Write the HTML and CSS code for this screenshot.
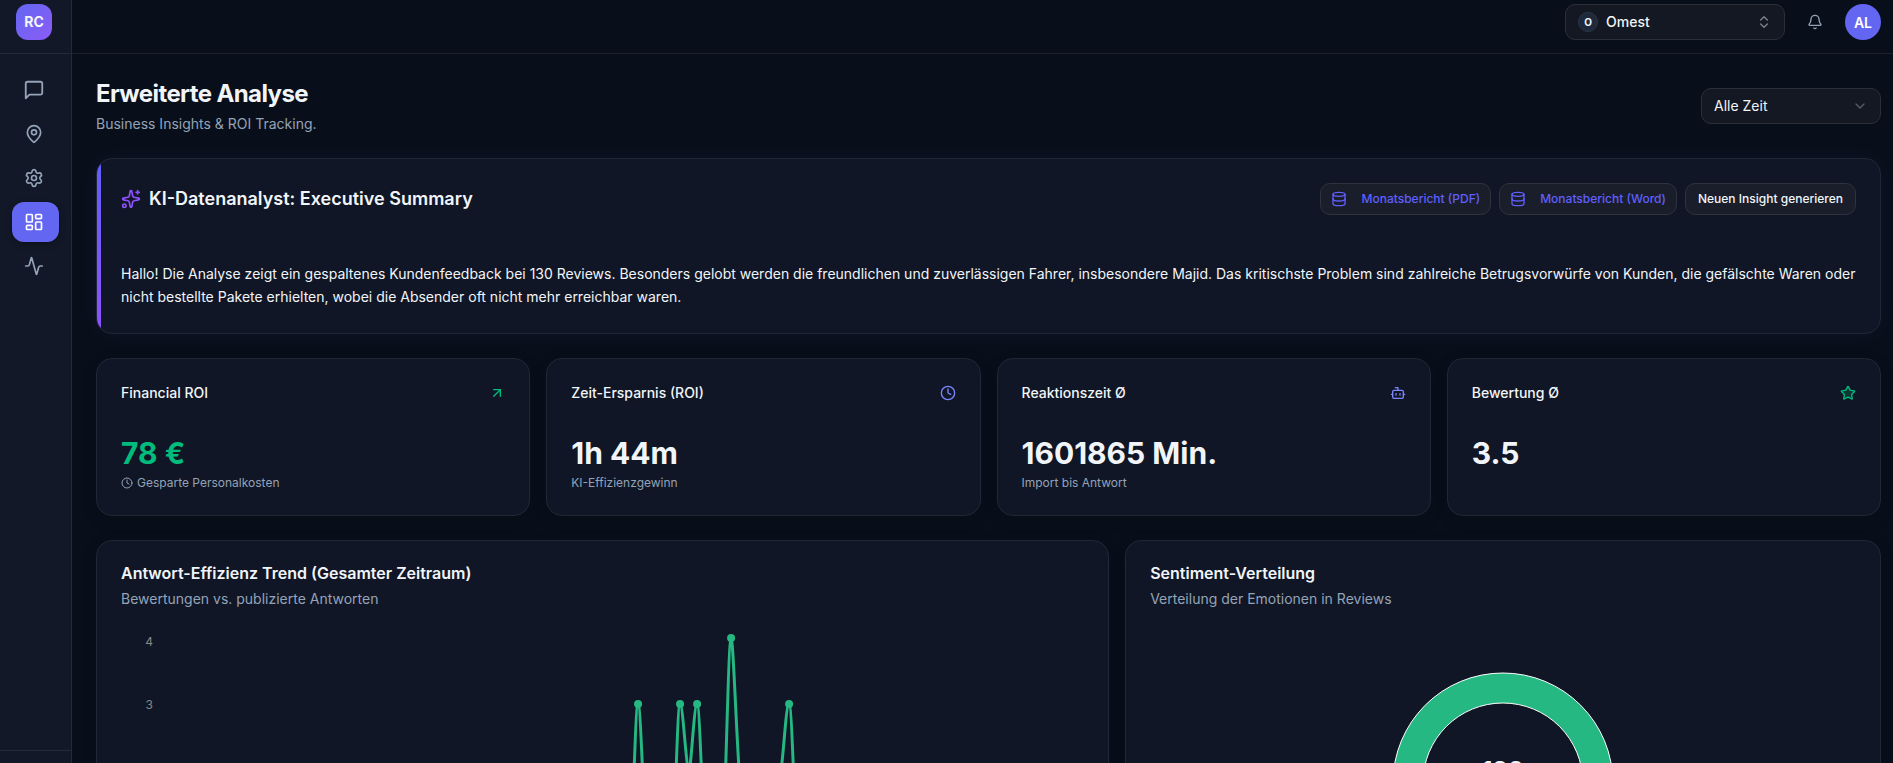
FILE: index.html
```html
<!DOCTYPE html>
<html lang="de">
<head>
  <meta charset="UTF-8">
  <meta name="viewport" content="width=device-width, initial-scale=1.0">
  <title>Erweiterte Analyse</title>
  <link rel="stylesheet" href="styles.css">
</head>
<body>
<aside class="sidebar">
  <div class="sidebar-header">
    <a href="#" class="logo">RC</a>
  </div>
  <nav class="sidebar-nav">
    <a href="#" class="nav-link" aria-label="Bewertungen">
      <svg class="icon icon-lg" viewBox="0 0 24 24"><path d="M21 15a2 2 0 0 1-2 2H7l-4 4V5a2 2 0 0 1 2-2h14a2 2 0 0 1 2 2z" transform="translate(-1.2 -1.2) scale(1.1)"/></svg>
    </a>
    <a href="#" class="nav-link" aria-label="Standorte">
      <svg class="icon icon-lg" viewBox="0 0 24 24"><path d="M20 10c0 4.993-5.539 10.193-7.399 11.799a1 1 0 0 1-1.202 0C9.539 20.193 4 14.993 4 10a8 8 0 0 1 16 0"/><circle cx="12" cy="10" r="3"/></svg>
    </a>
    <a href="#" class="nav-link" aria-label="Einstellungen">
      <svg class="icon icon-lg" viewBox="0 0 24 24"><path d="M9.671 4.136a2.34 2.34 0 0 1 4.659 0 2.34 2.34 0 0 0 3.319 1.915 2.34 2.34 0 0 1 2.33 4.033 2.34 2.34 0 0 0 0 3.831 2.34 2.34 0 0 1-2.33 4.033 2.34 2.34 0 0 0-3.319 1.915 2.34 2.34 0 0 1-4.659 0 2.34 2.34 0 0 0-3.32-1.915 2.34 2.34 0 0 1-2.33-4.033 2.34 2.34 0 0 0 0-3.831A2.34 2.34 0 0 1 6.35 6.051a2.34 2.34 0 0 0 3.319-1.915"/><circle cx="12" cy="12" r="3"/></svg>
    </a>
    <a href="#" class="nav-link active" aria-label="Analyse" aria-current="page">
      <svg class="icon icon-lg" viewBox="0 0 24 24"><rect width="7" height="9" x="3" y="3" rx="1"/><rect width="7" height="5" x="14" y="3" rx="1"/><rect width="7" height="9" x="14" y="12" rx="1"/><rect width="7" height="5" x="3" y="16" rx="1"/></svg>
    </a>
    <a href="#" class="nav-link" aria-label="Aktivität">
      <svg class="icon icon-lg" viewBox="0 0 24 24"><path d="M22 12h-2.48a2 2 0 0 0-1.93 1.46l-2.35 8.36a.25.25 0 0 1-.48 0L9.24 2.18a.25.25 0 0 0-.48 0l-2.35 8.36A2 2 0 0 1 4.49 12H2"/></svg>
    </a>
  </nav>
  <div class="sidebar-footer"></div>
</aside>

<div class="page">
  <header class="topbar">
    <div class="select-box company-select">
      <span class="company-badge">O</span>
      <select aria-label="Unternehmen">
        <option>Omest</option>
      </select>
      <svg class="icon icon-sm select-icon" viewBox="0 0 24 24"><path d="m7 15 5 5 5-5"/><path d="m7 9 5-5 5 5"/></svg>
    </div>
    <button class="bell-button" aria-label="Benachrichtigungen">
      <svg class="icon icon-sm" viewBox="0 0 24 24"><path d="M10.268 21a2 2 0 0 0 3.464 0"/><path d="M3.262 15.326A1 1 0 0 0 4 17h16a1 1 0 0 0 .74-1.673C19.41 13.956 18 12.499 18 8A6 6 0 0 0 6 8c0 4.499-1.411 5.956-2.738 7.326"/></svg>
    </button>
    <button class="avatar">AL</button>
  </header>

  <main class="content">
    <div class="page-header">
      <div>
        <h1>Erweiterte Analyse</h1>
        <p class="subtitle">Business Insights &amp; ROI Tracking.</p>
      </div>
      <div class="select-box period-select">
        <select aria-label="Zeitraum">
          <option>Alle Zeit</option>
        </select>
        <svg class="icon icon-sm select-icon" viewBox="0 0 24 24"><path d="m6 9 6 6 6-6"/></svg>
      </div>
    </div>

    <section class="card summary">
      <div class="summary-header">
        <h2>
          <svg class="icon icon-lg" viewBox="0 0 24 24"><path d="M11.017 2.814a1 1 0 0 1 1.966 0l1.051 5.558a2 2 0 0 0 1.594 1.594l5.558 1.051a1 1 0 0 1 0 1.966l-5.558 1.051a2 2 0 0 0-1.594 1.594l-1.051 5.558a1 1 0 0 1-1.966 0l-1.051-5.558a2 2 0 0 0-1.594-1.594l-5.558-1.051a1 1 0 0 1 0-1.966l5.558-1.051a2 2 0 0 0 1.594-1.594z"/><path d="M20 2v4"/><path d="M22 4h-4"/><circle cx="4" cy="20" r="2"/></svg>
          KI-Datenanalyst: Executive Summary
        </h2>
        <div class="summary-actions">
          <button class="btn btn-report">
            <svg class="icon icon-sm" viewBox="0 0 24 24"><ellipse cx="12" cy="5" rx="9" ry="3"/><path d="M3 5V19A9 3 0 0 0 21 19V5"/><path d="M3 12A9 3 0 0 0 21 12"/></svg>
            Monatsbericht (PDF)
          </button>
          <button class="btn btn-report">
            <svg class="icon icon-sm" viewBox="0 0 24 24"><ellipse cx="12" cy="5" rx="9" ry="3"/><path d="M3 5V19A9 3 0 0 0 21 19V5"/><path d="M3 12A9 3 0 0 0 21 12"/></svg>
            Monatsbericht (Word)
          </button>
          <button class="btn">Neuen Insight generieren</button>
        </div>
      </div>
      <p class="summary-text">Hallo! Die Analyse zeigt ein gespaltenes Kundenfeedback bei 130 Reviews. Besonders gelobt werden die freundlichen und zuverlässigen Fahrer, insbesondere Majid. Das kritischste Problem sind zahlreiche Betrugsvorwürfe von Kunden, die gefälschte Waren oder nicht bestellte Pakete erhielten, wobei die Absender oft nicht mehr erreichbar waren.</p>
    </section>

    <section class="stats">
      <div class="card stat">
        <div class="stat-header">
          <h3>Financial ROI</h3>
          <svg class="icon icon-sm green" viewBox="0 0 24 24"><path d="M7 7h10v10"/><path d="M7 17 17 7"/></svg>
        </div>
        <div class="stat-value green">78 €</div>
        <p class="stat-note">
          <svg class="icon icon-xs" viewBox="0 0 24 24"><circle cx="12" cy="12" r="10"/><path d="M12 6v6l4 2"/></svg>
          Gesparte Personalkosten
        </p>
      </div>
      <div class="card stat">
        <div class="stat-header">
          <h3>Zeit-Ersparnis (ROI)</h3>
          <svg class="icon icon-sm indigo" viewBox="0 0 24 24"><circle cx="12" cy="12" r="10"/><path d="M12 6v6l4 2"/></svg>
        </div>
        <div class="stat-value">1h 44m</div>
        <p class="stat-note">KI-Effizienzgewinn</p>
      </div>
      <div class="card stat">
        <div class="stat-header">
          <h3>Reaktionszeit Ø</h3>
          <svg class="icon icon-sm indigo" viewBox="0 0 24 24"><path d="M12 8V4H8"/><rect width="16" height="12" x="4" y="8" rx="2"/><path d="M2 14h2"/><path d="M20 14h2"/><path d="M15 13v2"/><path d="M9 13v2"/></svg>
        </div>
        <div class="stat-value">1601865 Min.</div>
        <p class="stat-note">Import bis Antwort</p>
      </div>
      <div class="card stat">
        <div class="stat-header">
          <h3>Bewertung Ø</h3>
          <svg class="icon icon-sm green star" viewBox="0 0 24 24"><path d="M11.525 2.295a.53.53 0 0 1 .95 0l2.31 4.679a2.123 2.123 0 0 0 1.595 1.16l5.166.756a.53.53 0 0 1 .294.904l-3.736 3.638a2.123 2.123 0 0 0-.611 1.878l.882 5.14a.53.53 0 0 1-.771.56l-4.618-2.428a2.122 2.122 0 0 0-1.973 0L6.396 21.01a.53.53 0 0 1-.77-.56l.881-5.139a2.122 2.122 0 0 0-.611-1.879L2.16 9.795a.53.53 0 0 1 .294-.906l5.165-.755a2.122 2.122 0 0 0 1.597-1.16z"/></svg>
        </div>
        <div class="stat-value">3.5</div>
      </div>
    </section>

    <section class="charts">
      <div class="card chart-card trend">
        <h3>Antwort-Effizienz Trend (Gesamter Zeitraum)</h3>
        <p class="subtitle">Bewertungen vs. publizierte Antworten</p>
        <svg class="line-chart" viewBox="0 0 963 300">
          <text class="tick" x="32" y="13">4</text>
          <text class="tick" x="32" y="76">3</text>
          <path class="line" d="M60 270H501C504 270 506 204 509 204C512 204 514 71 517 71C520 71 523 204 526 204C530 204 532 270 534 270H542C545 270 548 204 551 204C554 204 556 71 559 71C562 71 565 137 568 137C570 137 573 71 576 71C579 71 582 204 584 204C588 204 590 270 593 270C596 270 599 204 601 204C604 204 607 5 610 5C612 5 615 93 618 137C621 182 624 270 626 270H651C654 270 657 160 660 137C663 115 665 71 668 71C671 71 674 204 676 204C680 204 682 270 685 270H950"/>
          <circle class="dot" cx="517" cy="71" r="4"/>
          <circle class="dot" cx="559" cy="71" r="4"/>
          <circle class="dot" cx="576" cy="71" r="4"/>
          <circle class="dot" cx="610" cy="5" r="4"/>
          <circle class="dot" cx="668" cy="71" r="4"/>
        </svg>
      </div>
      <div class="card chart-card sentiment">
        <h3>Sentiment-Verteilung</h3>
        <p class="subtitle">Verteilung der Emotionen in Reviews</p>
        <svg class="donut-chart" viewBox="0 0 300 300">
          <path class="donut" d="M150 40A110 110 0 0 1 150 260A110 110 0 0 1 150 40ZM150 70A80 80 0 0 0 150 230A80 80 0 0 0 150 70Z"/>
          <text class="donut-total" x="150" y="146">130</text>
        </svg>
      </div>
    </section>
  </main>
</div>
</body>
</html>
```
FILE: styles.css
```css
* {
  box-sizing: border-box;
}

body {
  display: flex;
  height: 100vh;
  margin: 0;
  overflow: hidden;
  font-family: Inter, sans-serif;
  font-size: 14px;
  line-height: 20px;
  color: #f1f5f9;
  background-color: #090f1a;
}

h1, h2, h3, p {
  margin: 0;
}

a {
  color: inherit;
  text-decoration: none;
}

button, select {
  font-family: inherit;
  color: inherit;
  cursor: pointer;
}

.icon {
  flex-shrink: 0;
  fill: none;
  stroke: currentColor;
  stroke-width: 2;
  stroke-linecap: round;
  stroke-linejoin: round;
}

.icon-lg {
  width: 20px;
  height: 20px;
}

.icon-sm {
  width: 16px;
  height: 16px;
}

.icon-xs {
  width: 12px;
  height: 12px;
}

/* Sidebar */
.sidebar {
  display: flex;
  flex-direction: column;
  width: 72px;
  flex-shrink: 0;
  background-color: #121827;
  border-right: 1px solid #242a38;
}

.sidebar-header {
  height: 54px;
  padding: 4px 16px;
  border-bottom: 1px solid #242a38;
}

.logo {
  display: flex;
  align-items: center;
  justify-content: center;
  width: 36px;
  height: 36px;
  border-radius: 12px;
  font-weight: 700;
  background: linear-gradient(135deg, #6366f1, #8b5cf6);
}

.sidebar-nav {
  display: flex;
  flex: 1;
  flex-direction: column;
  gap: 4px;
  padding: 16px 12px;
}

.nav-link {
  display: flex;
  align-items: center;
  height: 40px;
  padding: 0 12px;
  border-radius: 12px;
  color: #94a3b8;
}

.nav-link.active {
  color: #ffffff;
  background-color: #6366f1;
  box-shadow: 0 2px 6px rgba(0, 0, 0, 0.3);
}

.sidebar-footer {
  height: 13px;
  border-top: 1px solid #242a38;
}

/* Topbar */
.page {
  display: flex;
  flex: 1;
  flex-direction: column;
  min-width: 0;
}

.topbar {
  display: flex;
  justify-content: flex-end;
  flex-shrink: 0;
  gap: 12px;
  height: 54px;
  padding: 4px 12px;
  border-bottom: 1px solid #1c212d;
}

.select-box {
  display: flex;
  align-items: center;
  height: 36px;
  padding: 0 12px;
  border: 1px solid #2b2f3a;
  border-radius: 10px;
  background-color: #141822;
}

.select-box select {
  flex: 1;
  min-width: 0;
  height: 34px;
  padding: 0 0 2px;
  border: none;
  font-size: 14px;
  background: none;
  appearance: none;
}

.select-icon {
  color: #7b8292;
  pointer-events: none;
}

.company-select {
  gap: 8px;
  width: 220px;
}

.company-select select {
  font-weight: 500;
}

.company-badge {
  width: 20px;
  height: 20px;
  border: 1px solid #2b3646;
  border-radius: 50%;
  font-size: 10px;
  font-weight: 700;
  line-height: 18px;
  text-align: center;
  background-color: #1e293b;
}

.period-select {
  width: 180px;
}

.period-select .select-icon {
  color: #565c6a;
}

.bell-button {
  display: flex;
  align-items: center;
  justify-content: center;
  width: 36px;
  height: 36px;
  padding: 0;
  border: none;
  color: #94a3b8;
  background: none;
}

.avatar {
  width: 36px;
  height: 36px;
  padding: 0;
  border: none;
  border-radius: 50%;
  font-size: 14px;
  font-weight: 600;
  color: #ffffff;
  background-color: #6366f1;
}

/* Content */
.content {
  display: flex;
  flex: 1;
  flex-direction: column;
  gap: 24px;
  min-height: 0;
  padding: 24px 12px 24px 24px;
  overflow-y: auto;
  scrollbar-width: none;
}

.page-header {
  display: flex;
  align-items: center;
  justify-content: space-between;
}

h1 {
  margin-bottom: 4px;
  font-size: 24px;
  line-height: 32px;
  font-weight: 700;
  letter-spacing: -0.025em;
}

.subtitle {
  color: #94a3b8;
}

.card {
  flex-shrink: 0;
  padding: 24px;
  border: 1px solid #222735;
  border-radius: 16px;
  background-color: #101625;
  box-shadow: 0 4px 16px rgba(0, 0, 0, 0.1);
}

/* Summary */
.summary {
  position: relative;
  overflow: hidden;
  box-shadow: 0 0 20px rgba(99, 102, 241, 0.06);
}

.summary::before {
  content: "";
  position: absolute;
  top: 0;
  bottom: 0;
  left: 0;
  width: 4px;
  background: linear-gradient(to bottom, #615fff, #8e51ff);
}

.summary-header {
  display: flex;
  align-items: center;
  justify-content: space-between;
  margin-bottom: 47px;
}

h2 {
  display: flex;
  align-items: center;
  gap: 8px;
  font-size: 18px;
  line-height: 28px;
  font-weight: 600;
}

h2 .icon {
  color: #8e51ff;
}

.summary-actions {
  display: flex;
  gap: 8px;
}

.btn {
  display: flex;
  align-items: center;
  height: 32px;
  padding: 0 12px 1px;
  border: 1px solid #2e333e;
  border-radius: 10px;
  font-size: 12px;
  line-height: 16px;
  font-weight: 500;
  background-color: #191e2a;
}

.btn-report {
  gap: 14px;
  padding: 0 10px 1px;
  color: #615fff;
}

.summary-text {
  margin-bottom: 1px;
  line-height: 23px;
}

/* Stats */
.stats {
  display: grid;
  grid-template-columns: repeat(4, 1fr);
  gap: 16px;
}

.stat-header {
  display: flex;
  align-items: center;
  justify-content: space-between;
  margin-bottom: 32px;
}

.stat-header h3 {
  font-size: 14px;
  line-height: 20px;
  font-weight: 500;
}

.stat-value {
  font-size: 30px;
  line-height: 36px;
  font-weight: 700;
}

.stat-note {
  display: flex;
  align-items: center;
  gap: 4px;
  margin-top: 4px;
  font-size: 12px;
  line-height: 16px;
  color: #94a3b8;
}

.green {
  color: #00bc7d;
}

.indigo {
  color: #7c86ff;
}

.star {
  fill: rgba(0, 188, 125, 0.2);
}

/* Charts */
.charts {
  display: grid;
  grid-template-columns: repeat(7, 1fr);
  gap: 16px;
}

.trend {
  grid-column: span 4;
}

.sentiment {
  grid-column: span 3;
}

.chart-card h3 {
  margin-bottom: 8px;
  font-size: 16px;
  line-height: 16px;
  font-weight: 600;
}

.chart-card .subtitle {
  margin-bottom: 24px;
}

.line-chart {
  display: block;
  width: 100%;
  overflow: visible;
}

.line {
  fill: none;
  stroke: #26b882;
  stroke-width: 3;
}

.dot {
  fill: #26b882;
}

.tick {
  font-size: 12px;
  fill: #888888;
  text-anchor: end;
}

.donut-chart {
  display: block;
  width: 100%;
  height: 300px;
}

.donut {
  fill: #26b882;
  stroke: #ffffff;
  stroke-width: 1;
}

.donut-total {
  font-size: 24px;
  font-weight: 700;
  fill: #f1f5f9;
  text-anchor: middle;
}
```
